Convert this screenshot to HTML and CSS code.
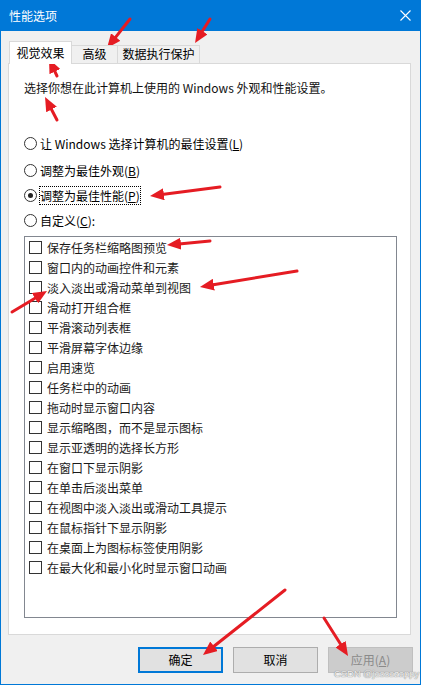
FILE: index.html
```html
<!DOCTYPE html>
<html lang="zh-CN">
<head>
<meta charset="utf-8">
<title>性能选项</title>
<link rel="stylesheet" href="styles.css">
</head>
<body>
<div class="window">
  <div class="titlebar">
    <span class="title">性能选项</span>
    <svg class="close" width="11" height="11" viewBox="0 0 11 11"><path d="M0.5 0.5 L10.5 10.5 M10.5 0.5 L0.5 10.5" stroke="#fff" stroke-width="1.1" fill="none"/></svg>
  </div>
  <div class="tabs">
    <div class="tab active">视觉效果</div>
    <div class="tab t2">高级</div>
    <div class="tab t3">数据执行保护</div>
  </div>
  <div class="panel">
    <p class="desc">选择你想在此计算机上使用的 Windows 外观和性能设置。</p>
    <div class="radios">
      <div class="radio r1"><span class="rb"></span><span class="lbl">让 Windows 选择计算机的最佳设置(<u>L</u>)</span></div>
      <div class="radio r2"><span class="rb"></span><span class="lbl">调整为最佳外观(<u>B</u>)</span></div>
      <div class="radio r3"><span class="rb checked"></span><span class="lbl focus">调整为最佳性能(<u>P</u>)</span></div>
      <div class="radio r4"><span class="rb"></span><span class="lbl">自定义(<u>C</u>):</span></div>
    </div>
    <div class="list">
      <div class="item"><span class="cb"></span><span>保存任务栏缩略图预览</span></div>
      <div class="item"><span class="cb"></span><span>窗口内的动画控件和元素</span></div>
      <div class="item"><span class="cb"></span><span>淡入淡出或滑动菜单到视图</span></div>
      <div class="item"><span class="cb"></span><span>滑动打开组合框</span></div>
      <div class="item"><span class="cb"></span><span>平滑滚动列表框</span></div>
      <div class="item"><span class="cb"></span><span>平滑屏幕字体边缘</span></div>
      <div class="item"><span class="cb"></span><span>启用速览</span></div>
      <div class="item"><span class="cb"></span><span>任务栏中的动画</span></div>
      <div class="item"><span class="cb"></span><span>拖动时显示窗口内容</span></div>
      <div class="item"><span class="cb"></span><span>显示缩略图，而不是显示图标</span></div>
      <div class="item"><span class="cb"></span><span>显示亚透明的选择长方形</span></div>
      <div class="item"><span class="cb"></span><span>在窗口下显示阴影</span></div>
      <div class="item"><span class="cb"></span><span>在单击后淡出菜单</span></div>
      <div class="item"><span class="cb"></span><span>在视图中淡入淡出或滑动工具提示</span></div>
      <div class="item"><span class="cb"></span><span>在鼠标指针下显示阴影</span></div>
      <div class="item"><span class="cb"></span><span>在桌面上为图标标签使用阴影</span></div>
      <div class="item"><span class="cb"></span><span>在最大化和最小化时显示窗口动画</span></div>
    </div>
  </div>
  <div class="buttons">
    <div class="btn default">确定</div>
    <div class="btn">取消</div>
    <div class="btn disabled">应用(<u>A</u>)</div>
  </div>
</div>
<div class="watermark">CSDN @jessezappy</div>
<svg class="arrows" width="421" height="685" viewBox="0 0 421 685">
  <defs>
    <marker id="ah" markerWidth="14" markerHeight="12" refX="2" refY="6" orient="auto" markerUnits="userSpaceOnUse">
      <path d="M0,0 L14,6 L0,12 Z" fill="#e51c23"/>
    </marker>
  </defs>
  <g stroke="#e51c23" stroke-width="3" stroke-linecap="round" marker-end="url(#ah)">
    <line x1="130" y1="19" x2="114.5" y2="38.6"/>
    <line x1="210" y1="19" x2="201.4" y2="32.8"/>
    <line x1="57" y1="76" x2="54.1" y2="69.8"/>
    <line x1="57" y1="120" x2="50.6" y2="107.7"/>
    <line x1="220" y1="187" x2="161.9" y2="194.5"/>
    <line x1="210" y1="241" x2="178.9" y2="243.9"/>
    <line x1="297" y1="271" x2="211.8" y2="285"/>
    <line x1="12" y1="312" x2="36.7" y2="297.2"/>
    <line x1="285" y1="590" x2="212.4" y2="647.5"/>
    <line x1="324" y1="618" x2="341.6" y2="645.8"/>
  </g>
</svg>
</body>
</html>
```

FILE: styles.css
```css
* { box-sizing: border-box; }

body {
  margin: 0;
  width: 421px;
  height: 685px;
  position: relative;
  overflow: hidden;
  background: #fff;
  font-family: "Noto Sans CJK SC", "Microsoft YaHei", sans-serif;
  font-size: 12px;
  color: #000;
}

.window {
  width: 421px;
  height: 685px;
  border: 1px solid #0078d7;
  border-top: 0;
  background: #f0f0f0;
  display: flex;
  flex-direction: column;
}

.titlebar {
  height: 31px;
  flex: none;
  background: #0078d7;
  color: #fff;
  display: flex;
  align-items: center;
  justify-content: space-between;
  padding: 0 9px 0 8px;
}

.title { line-height: 16px; }
.close { display: block; }

.tabs {
  display: flex;
  align-items: flex-end;
  height: 22px;
  margin: 10px 0 0 8px;
  position: relative;
  z-index: 1;
}

.tab {
  height: 18px;
  border-top: 1px solid #d9d9d9;
  border-right: 1px solid #d9d9d9;
  background: #f0f0f0;
  line-height: 16px;
  text-align: center;
  white-space: nowrap;
}

.tab.active {
  width: 63px;
  height: 23px;
  margin-bottom: -1px;
  border: 1px solid #d9d9d9;
  border-bottom: 0;
  background: #fff;
  line-height: 21px;
}

.tab.t2 { width: 46px; }
.tab.t3 { width: 82px; }

.panel {
  margin: 0 9px 0 7px;
  height: 572px;
  border: 1px solid #d9d9d9;
  background: #fff;
  padding: 16px 0 0 15px;
}

.desc {
  margin: 0;
  line-height: 16px;
  white-space: nowrap;
  color: #111;
}

.radios { margin-top: 37px; }

.radio {
  display: flex;
  align-items: center;
  height: 20px;
}

.r2 { margin-top: 7px; }
.r3, .r4 { margin-top: 5px; }

.rb {
  width: 13px;
  height: 13px;
  border: 1px solid #333;
  border-radius: 50%;
  background: #fff;
  display: flex;
  align-items: center;
  justify-content: center;
  flex: none;
}

.rb.checked::after {
  content: "";
  width: 5px;
  height: 5px;
  border-radius: 50%;
  background: #222;
}

.lbl {
  margin-left: 2px;
  border: 1px dotted transparent;
  line-height: 17px;
  white-space: nowrap;
}

.lbl.focus { border-color: #000; }

.list {
  margin-top: 6px;
  width: 373px;
  height: 382px;
  border: 1px solid #828790;
  background: #fff;
}

.item {
  height: 20px;
  display: flex;
  align-items: center;
  padding-left: 4px;
  white-space: nowrap;
  color: #1a1a1a;
}

.cb {
  width: 13px;
  height: 13px;
  border: 1px solid #333;
  background: #fff;
  margin-right: 5px;
  flex: none;
}

.buttons {
  display: flex;
  justify-content: flex-end;
  gap: 10px;
  padding-right: 7px;
  margin-top: 12px;
}

.btn {
  width: 85px;
  height: 26px;
  border: 1px solid #adadad;
  background: #e1e1e1;
  display: flex;
  align-items: center;
  justify-content: center;
  line-height: 16px;
}

.btn.default { border: 2px solid #0078d7; }

.btn.disabled {
  background: #cccccc;
  border-color: #bfbfbf;
  color: #8a8a8a;
}

.watermark {
  position: absolute;
  left: 334px;
  top: 667px;
  font-family: "Liberation Sans", Arial, sans-serif;
  font-size: 9.5px;
  line-height: 14px;
  letter-spacing: -0.1px;
  color: #eeeeee;
  text-shadow: 0 0 1px #8a8a8a, 0 0 1px #8a8a8a;
  white-space: nowrap;
}

.arrows {
  position: absolute;
  left: 0;
  top: 0;
  pointer-events: none;
}
```
